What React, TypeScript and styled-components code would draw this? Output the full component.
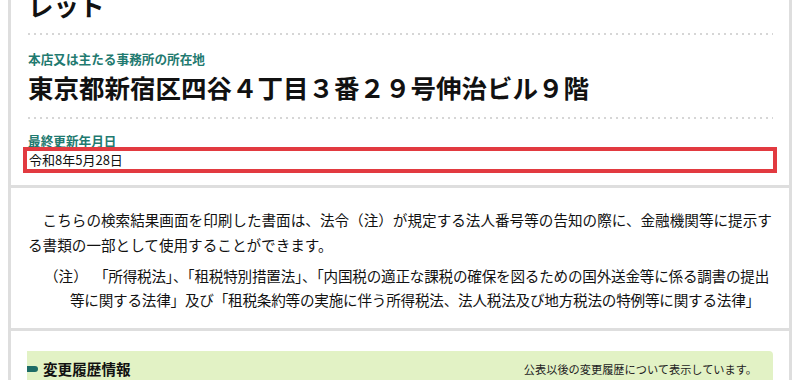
import { createGlobalStyle } from "styled-components";
import styled from "styled-components";

const GlobalStyle = createGlobalStyle`
  html, body {
    margin: 0;
    padding: 0;
    background: #ffffff;
  }
  body {
    font-family: "Noto Sans CJK JP", "Noto Sans", sans-serif;
    color: #111111;
  }
`;

// Page wrapper
const Page = styled.div`
  padding: 0 8px;
  overflow: hidden;
  height: 380px;
`;

// Stacked bordered panels
const Card = styled.section<{ $top?: number; $bottom?: number; $open?: boolean }>`
  border-left: 3px solid #dedede;
  border-right: 3px solid #dedede;
  border-bottom: ${(p) => (p.$open ? "0" : "3px solid #dedede")};
  padding: ${(p) => p.$top ?? 20}px 15px ${(p) => p.$bottom ?? 16}px 17px;
`;

const CompanyName = styled.h1`
  margin: -12px 0 12px;
  font-size: 25.5px;
  line-height: 33px;
  font-weight: 700;
`;

const Divider = styled.hr`
  margin: 0 1px 0 0;
  border: 0;
  height: 2px;
  background: linear-gradient(to right, #d6d6d6 2px, transparent 2px) 0 0 /
    6px 2px repeat-x;
`;

const Field = styled.dl<{ $top: number; $bottom: number }>`
  margin: 0;
  padding: ${(p) => p.$top}px 0 ${(p) => p.$bottom}px;
`;

const Label = styled.dt`
  font-size: 12.65px;
  line-height: 21px;
  font-weight: 700;
  color: #1f7a70;
`;

const Address = styled.dd`
  margin: 0;
  font-size: 25.5px;
  line-height: 36px;
  font-weight: 700;
`;

const DateValue = styled.dd`
  margin: 0 1px 0 -1px;
  padding-left: 2px;
  font-size: 13px;
  line-height: 18.6px;
  outline: 4px solid #e23a40;
`;

const Text = styled.p`
  margin: 0;
  font-size: 14.6px;
  line-height: 24.5px;
  text-indent: 1em;
`;

const Note = styled.p`
  margin: 6.5px 0 0;
  padding-left: 42px;
  text-indent: -26px;
  font-size: 14.6px;
  line-height: 24.5px;
  letter-spacing: -0.22px;
`;

const NoteMark = styled.span`
  display: inline-block;
  width: 50px;
  text-indent: 0;
  letter-spacing: 0;
`;

const HistoryHeader = styled.div`
  display: flex;
  align-items: center;
  justify-content: space-between;
  margin: 0 1px 0 -1px;
  padding: 7px 16px 8px 0;
  background: #e2f2c5;
  border-radius: 0 4px 0 0;
`;

const HistoryTitle = styled.h2`
  display: flex;
  align-items: center;
  gap: 5px;
  margin: 0;
  font-size: 14.6px;
  line-height: 22px;
  font-weight: 700;

  &::before {
    content: "";
    width: 11px;
    height: 6px;
    background: #1d6c66;
    border-radius: 0 3px 3px 0;
  }
`;

const HistoryNote = styled.span`
  font-size: 11.2px;
  line-height: 22px;
  color: #222222;
`;

export default function App() {
  return (
    <Page>
      <GlobalStyle />
      <Card $top={0} $bottom={16}>
        <CompanyName>レット</CompanyName>
        <Divider />
        <Field $top={12.5} $bottom={12.5}>
          <Label>本店又は主たる事務所の所在地</Label>
          <Address>東京都新宿区四谷４丁目３番２９号伸治ビル９階</Address>
        </Field>
        <Divider />
        <Field $top={10.8} $bottom={0}>
          <Label>最終更新年月日</Label>
          <DateValue>令和8年5月28日</DateValue>
        </Field>
      </Card>
      <Card $top={20} $bottom={15}>
        <Text>
          こちらの検索結果画面を印刷した書面は、法令（注）が規定する法人番号等の告知の際に、金融機関等に提示する書類の一部として使用することができます。
        </Text>
        <Note>
          <NoteMark>（注）</NoteMark>
          「所得税法」、「租税特別措置法」、「内国税の適正な課税の確保を図るための国外送金等に係る調書の提出等に関する法律」及び「租税条約等の実施に伴う所得税法、法人税法及び地方税法の特例等に関する法律」
        </Note>
      </Card>
      <Card $top={20} $bottom={0} $open>
        <HistoryHeader>
          <HistoryTitle>変更履歴情報</HistoryTitle>
          <HistoryNote>公表以後の変更履歴について表示しています。</HistoryNote>
        </HistoryHeader>
      </Card>
    </Page>
  );
}
